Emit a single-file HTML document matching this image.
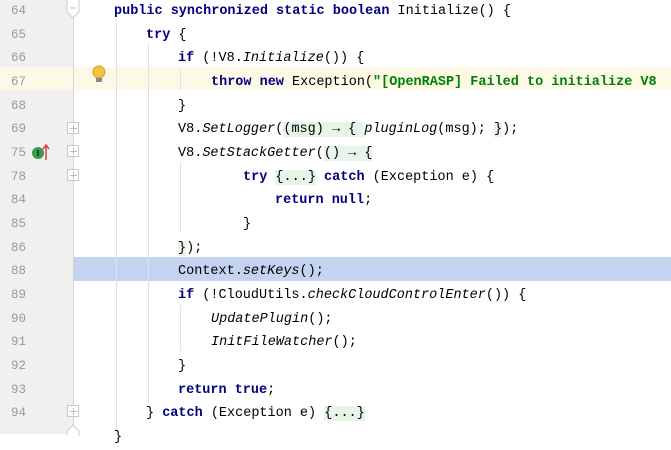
<!DOCTYPE html>
<html><head><style>
body{margin:0;width:671px;height:434px;overflow:hidden;background:#fff;position:relative;font-family:"Liberation Mono",monospace;font-size:13.5px}
.g{position:absolute;left:0;top:0;width:73px;height:434px;background:#f0f0f0}
.sep{position:absolute;left:73px;top:0;width:1px;height:434px;background:#d5d5d5}
.hl67{position:absolute;left:0;top:67px;width:671px;height:23px;background:#fcf9e6}
.hl88{position:absolute;left:74px;top:257px;width:597px;height:24px;background:#c3d3f0}
.n{position:absolute;left:0;width:26px;text-align:right;color:#999;font-family:"Liberation Mono",monospace;font-size:12.5px}
.l{position:absolute;white-space:pre;color:#000;line-height:24px;height:24px;margin-top:1px}
.k{color:#000080;font-weight:bold}
.s{color:#008000;font-weight:bold}
.i{font-style:italic}
.f{background:#e8f4e8}
.gd{position:absolute;width:1px;background:#e2e2e2}
.fb{position:absolute;left:67px;width:10px;height:10px;border:1px solid #c8c8c8;background:#fff}
.fb:before{content:"";position:absolute;left:2px;top:5px;width:7px;height:1px;background:#bbb}
.fb:after{content:"";position:absolute;left:5px;top:2px;width:1px;height:7px;background:#bbb}
</style></head><body>
<div class="g"></div>
<div class="hl67"></div>
<div class="hl88"></div>
<div class="sep"></div>
<div class="gd" style="left:116px;top:20px;height:414px"></div>
<div class="gd" style="left:148px;top:44px;height:360px"></div>
<div class="gd" style="left:180px;top:68px;height:22px"></div>
<div class="gd" style="left:180px;top:162px;height:70px"></div>
<div class="gd" style="left:180px;top:305px;height:46px"></div>

<div class="n" style="top:4px">64</div>
<div class="n" style="top:28px">65</div>
<div class="n" style="top:51px">66</div>
<div class="n" style="top:75px">67</div>
<div class="n" style="top:99px">68</div>
<div class="n" style="top:122px">69</div>
<div class="n" style="top:146px">75</div>
<div class="n" style="top:170px">78</div>
<div class="n" style="top:193px">84</div>
<div class="n" style="top:217px">85</div>
<div class="n" style="top:241px">86</div>
<div class="n" style="top:264px">88</div>
<div class="n" style="top:288px">89</div>
<div class="n" style="top:312px">90</div>
<div class="n" style="top:335px">91</div>
<div class="n" style="top:359px">92</div>
<div class="n" style="top:383px">93</div>
<div class="n" style="top:406px">94</div>

<svg style="position:absolute;left:66px;top:0" width="14" height="20"><path d="M1 0V12L7 18L13 12V0" fill="#fff" stroke="#ccc"/><path d="M4 8H10" stroke="#bbb"/></svg>
<div class="fb" style="top:122px"></div>
<div class="fb" style="top:145px"></div>
<div class="fb" style="top:169px"></div>
<div class="fb" style="top:405px"></div>
<svg style="position:absolute;left:66px;top:424px" width="14" height="12"><path d="M1 12V7L7 1L13 7V12" fill="#fff" stroke="#ccc"/></svg>

<svg style="position:absolute;left:92px;top:65px" width="14" height="20"><circle cx="7" cy="7" r="6" fill="#f5c046" stroke="#e0a020"/><rect x="4" y="13" width="6" height="4" fill="#888"/></svg>
<svg style="position:absolute;left:31px;top:143px" width="22" height="18"><circle cx="7" cy="10" r="6" fill="#3a9a4a"/><rect x="6" y="7" width="2" height="6" fill="#1a4a1a"/><path d="M15 17V3M12 6L15 2L18 6" stroke="#e04040" stroke-width="1.5" fill="none"/></svg>

<div class="l" style="left:114px;top:-1px"><span class="k">public synchronized static boolean</span> Initialize() {</div>
<div class="l" style="left:146px;top:23px"><span class="k">try</span> {</div>
<div class="l" style="left:178px;top:46px"><span class="k">if</span> (!V8.<span class="i">Initialize</span>()) {</div>
<div class="l" style="left:211px;top:70px"><span class="k">throw new</span> Exception(<span class="s">"[OpenRASP] Failed to initialize V8</span></div>
<div class="l" style="left:178px;top:94px">}</div>
<div class="l" style="left:178px;top:117px">V8.<span class="i">SetLogger</span>(<span class="f">(msg) → { </span><span class="i">pluginLog</span>(msg); <span class="f">}</span>);</div>
<div class="l" style="left:178px;top:141px">V8.<span class="i">SetStackGetter</span>(<span class="f">() → {</span></div>
<div class="l" style="left:243px;top:165px"><span class="k">try</span> <span class="f">{...}</span> <span class="k">catch</span> (Exception e) {</div>
<div class="l" style="left:275px;top:188px"><span class="k">return null</span>;</div>
<div class="l" style="left:243px;top:212px">}</div>
<div class="l" style="left:178px;top:236px"><span class="f">}</span>);</div>
<div class="l" style="left:178px;top:259px">Context.<span class="i">setKeys</span>();</div>
<div class="l" style="left:178px;top:283px"><span class="k">if</span> (!CloudUtils.<span class="i">checkCloudControlEnter</span>()) {</div>
<div class="l" style="left:211px;top:307px"><span class="i">UpdatePlugin</span>();</div>
<div class="l" style="left:211px;top:330px"><span class="i">InitFileWatcher</span>();</div>
<div class="l" style="left:178px;top:354px">}</div>
<div class="l" style="left:178px;top:378px"><span class="k">return true</span>;</div>
<div class="l" style="left:146px;top:401px">} <span class="k">catch</span> (Exception e) <span class="f">{...}</span></div>
<div class="l" style="left:114px;top:425px">}</div>
</body></html>
